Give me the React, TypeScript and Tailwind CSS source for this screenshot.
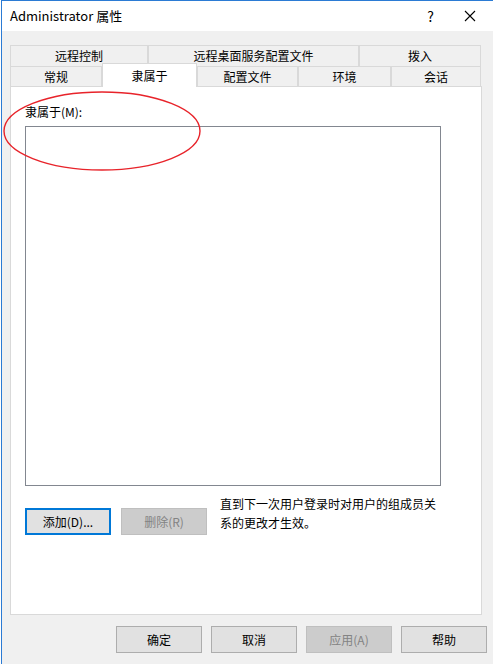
import React from 'react';

const font = { fontFamily: '"Noto Sans CJK SC", "Noto Sans", sans-serif' };

const row1 = [
  { label: '远程控制', w: 'w-[138px]' },
  { label: '远程桌面服务配置文件', w: 'w-[211px]' },
  { label: '拨入', w: 'w-[122px]' },
];

const row2 = [
  { label: '常规', w: 'w-[92px]' },
  { label: '隶属于', w: 'w-[95px]', active: true },
  { label: '配置文件', w: 'w-[101px]' },
  { label: '环境', w: 'w-[93px]' },
  { label: '会话', w: 'w-[90px]' },
];

const DialogButton: React.FC<{ label: string; disabled?: boolean; focused?: boolean; className?: string }> = ({
  label,
  disabled,
  focused,
  className = '',
}) => (
  <button
    className={`h-[27px] w-[86px] text-[12px] leading-none ${
      disabled
        ? 'bg-[#cccccc] border border-[#bfbfbf] text-[#838383]'
        : focused
        ? 'bg-[#e1e1e1] border-2 border-[#0078d7] text-black'
        : 'bg-[#e1e1e1] border border-[#adadad] text-black'
    } ${className}`}
  >
    {label}
  </button>
);

const App: React.FC = () => {
  return (
    <div className="w-[493px] h-[664px] bg-white pl-px" style={font}>
      <div className="relative w-full h-full border-l border-t border-[#2b7bd4] bg-[#f0f0f0] flex flex-col">
        {/* Title bar */}
        <div className="h-[30px] bg-white flex items-center shrink-0">
          <span className="ml-[8px] text-[13px] text-black">Administrator 属性</span>
          <span className="ml-auto mr-[30px] text-[14px] text-black">?</span>
          <svg className="mr-[17px]" width="12" height="12" viewBox="0 0 12 12">
            <path d="M1 1 L11 11 M11 1 L1 11" stroke="#000" strokeWidth="1.1" />
          </svg>
        </div>

        {/* Tabs */}
        <div className="mt-[14px] ml-[8px] flex flex-col">
          <div className="flex h-[21px]">
            {row1.map((t) => (
              <div
                key={t.label}
                className={`${t.w} flex items-center justify-center border-l border-t border-r border-[#d9d9d9] text-[12px] text-black`}
              >
                {t.label}
              </div>
            ))}
          </div>
          <div className="flex h-[20px] items-end relative z-10">
            {row2.map((t) =>
              t.active ? (
                <div
                  key={t.label}
                  className={`${t.w} h-[24px] -mb-px flex items-center justify-center bg-white border-l border-t border-r border-[#d9d9d9] text-[12px] text-black`}
                >
                  {t.label}
                </div>
              ) : (
                <div
                  key={t.label}
                  className={`${t.w} h-[20px] flex items-center justify-center border-l border-t border-r border-[#d9d9d9] text-[12px] text-black`}
                >
                  {t.label}
                </div>
              )
            )}
          </div>
        </div>

        {/* Page */}
        <div className="ml-[8px] w-[472px] h-[529px] bg-white border border-[#d9d9d9] flex flex-col pl-[14px]">
          <div className="mt-[15px] h-[19px] text-[12px] text-black leading-[19px]">隶属于(M):</div>
          <div className="mt-[5px] w-[416px] h-[360px] border border-[#828790] bg-white" />
          <div className="mt-[8px] flex items-start">
            <DialogButton label="添加(D)..." focused className="mt-[14px]" />
            <DialogButton label="删除(R)" disabled className="mt-[14px] ml-[10px]" />
            <p className="ml-[13px] w-[218px] text-[12px] leading-[19px] text-black">
              直到下一次用户登录时对用户的组成员关系的更改才生效。
            </p>
          </div>
        </div>

        {/* Bottom buttons */}
        <div className="mt-[11px] flex justify-end gap-[9px] pr-[6px]">
          <DialogButton label="确定" />
          <DialogButton label="取消" />
          <DialogButton label="应用(A)" disabled />
          <DialogButton label="帮助" />
        </div>

        {/* Red annotation ellipse */}
        <svg className="absolute left-[-2px] top-[88px] pointer-events-none" width="204" height="86" viewBox="0 0 204 86">
          <ellipse cx="102" cy="42" rx="98" ry="39" fill="none" stroke="#e8232a" strokeWidth="1.4" />
        </svg>
      </div>
    </div>
  );
};

export default App;
